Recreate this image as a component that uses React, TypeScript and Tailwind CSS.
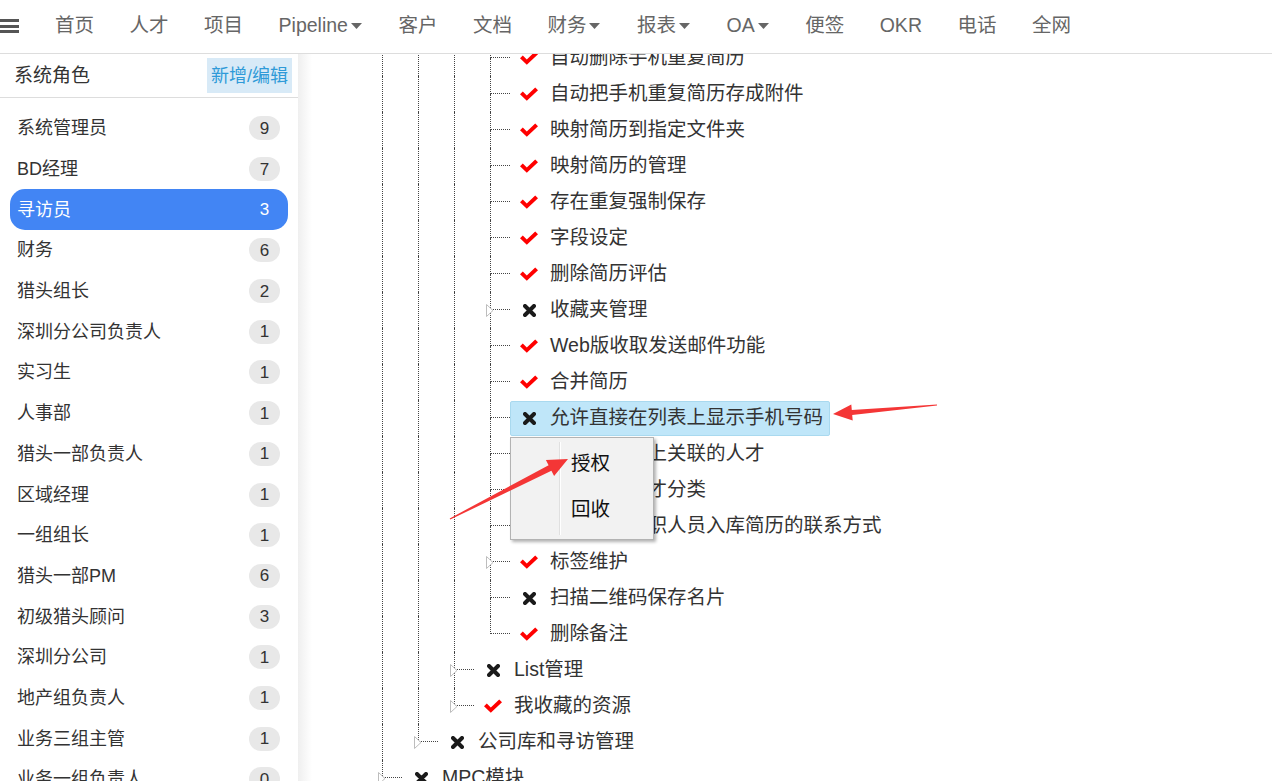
import React from 'react';

type TreeRow = {
  depth: number;
  ok: boolean;
  text: string;
  last?: boolean;
  collapsed?: boolean;
  selected?: boolean;
};

const navItems: { label: string; caret?: boolean }[] = [
  { label: '首页' },
  { label: '人才' },
  { label: '项目' },
  { label: 'Pipeline', caret: true },
  { label: '客户' },
  { label: '文档' },
  { label: '财务', caret: true },
  { label: '报表', caret: true },
  { label: 'OA', caret: true },
  { label: '便签' },
  { label: 'OKR' },
  { label: '电话' },
  { label: '全网' },
];

const roles: [string, number][] = [
  ['系统管理员', 9],
  ['BD经理', 7],
  ['寻访员', 3],
  ['财务', 6],
  ['猎头组长', 2],
  ['深圳分公司负责人', 1],
  ['实习生', 1],
  ['人事部', 1],
  ['猎头一部负责人', 1],
  ['区域经理', 1],
  ['一组组长', 1],
  ['猎头一部PM', 6],
  ['初级猎头顾问', 3],
  ['深圳分公司', 1],
  ['地产组负责人', 1],
  ['业务三组主管', 1],
  ['业务一组负责人', 0],
];

const rows: TreeRow[] = [
  { depth: 3, ok: true, text: '自动删除手机重复简历' },
  { depth: 3, ok: true, text: '自动把手机重复简历存成附件' },
  { depth: 3, ok: true, text: '映射简历到指定文件夹' },
  { depth: 3, ok: true, text: '映射简历的管理' },
  { depth: 3, ok: true, text: '存在重复强制保存' },
  { depth: 3, ok: true, text: '字段设定' },
  { depth: 3, ok: true, text: '删除简历评估' },
  { depth: 3, ok: false, text: '收藏夹管理', collapsed: true },
  { depth: 3, ok: true, text: 'Web版收取发送邮件功能' },
  { depth: 3, ok: true, text: '合并简历' },
  { depth: 3, ok: false, text: '允许直接在列表上显示手机号码', selected: true },
  { depth: 3, ok: true, text: '显示列表页上关联的人才' },
  { depth: 3, ok: true, text: '管理简历人才分类' },
  { depth: 3, ok: false, text: '允许查看离职人员入库简历的联系方式' },
  { depth: 3, ok: true, text: '标签维护', collapsed: true },
  { depth: 3, ok: false, text: '扫描二维码保存名片' },
  { depth: 3, ok: true, text: '删除备注', last: true },
  { depth: 2, ok: false, text: 'List管理', collapsed: true },
  { depth: 2, ok: true, text: '我收藏的资源', collapsed: true, last: true },
  { depth: 1, ok: false, text: '公司库和寻访管理', collapsed: true, last: true },
  { depth: 0, ok: false, text: 'MPC模块', collapsed: true },
];

function CheckIcon() {
  return (
    <svg width="18" height="14" viewBox="0 0 18 14">
      <polygon points="0,7.2 2.8,4.6 6.8,8.4 15.2,0.4 18,3.2 6.8,13.8" fill="#f00" />
    </svg>
  );
}

function CrossIcon() {
  return (
    <svg width="13" height="13" viewBox="0 0 13 13">
      <path d="M2 2 L11 11 M11 2 L2 11" stroke="#1a1a1a" strokeWidth="4" strokeLinecap="round" />
    </svg>
  );
}

function Row({ row }: { row: TreeRow }) {
  return (
    <div className="flex h-[36px] items-stretch">
      {Array.from({ length: row.depth }).map((_, i) => (
        <div key={i} className="w-[36px] shrink-0 pl-[8px]">
          <div className="h-full border-l border-dotted border-[#444]" />
        </div>
      ))}
      <div className="relative w-[28px] shrink-0 flex flex-col">
        <div className="ml-[8px] h-[18px] w-[20px] border-l border-b border-dotted border-[#444]" />
        {!row.last && <div className="ml-[8px] h-[18px] border-l border-dotted border-[#444]" />}
        {row.collapsed && (
          <svg className="absolute left-[4px] top-[12px]" width="8" height="13" viewBox="0 0 8 13">
            <polygon points="0.5,0.5 7,6.5 0.5,12.5" fill="#fff" stroke="#bdbdbd" strokeWidth="1" />
          </svg>
        )}
      </div>
      <div
        className={
          row.selected
            ? 'my-[0.5px] flex items-center pl-[9px] pr-[6px] bg-[#bfe6f9] border border-[#a9d9ef] rounded-[2px]'
            : 'flex items-center pl-[10px] pr-[7px]'
        }
      >
        <div className="w-[18px] flex justify-center">{row.ok ? <CheckIcon /> : <CrossIcon />}</div>
        <span className="ml-[12px] text-[19.5px] leading-none whitespace-nowrap text-[#333]">{row.text}</span>
      </div>
    </div>
  );
}

export default function App() {
  return (
    <div className="relative w-[1272px] h-[781px] overflow-hidden bg-white text-[#333] font-['Liberation_Sans','Noto_Sans_CJK_SC',sans-serif]">
      <header className="h-[54px] border-b border-[#dddddd] flex items-center pb-[1px]">
        <div className="w-[19px] flex flex-col gap-[2.5px]">
          <div className="h-[3px] bg-[#555]" />
          <div className="h-[3px] bg-[#555]" />
          <div className="h-[3px] bg-[#555]" />
        </div>
        <nav className="ml-[36px] flex items-center gap-[35.5px] text-[19.5px] leading-none text-[#666]">
          {navItems.map((n) => (
            <div key={n.label} className="flex items-center whitespace-nowrap">
              <span>{n.label}</span>
              {n.caret && (
                <svg className="ml-[3px] mr-[1px]" width="11" height="6" viewBox="0 0 11 6">
                  <polygon points="0,0 11,0 5.5,6" fill="#666" />
                </svg>
              )}
            </div>
          ))}
        </nav>
      </header>

      <div className="flex h-[727px]">
        <aside className="w-[298px] shrink-0 flex flex-col overflow-hidden">
          <div className="h-[44px] shrink-0 border-b border-[#dddddd] flex items-center justify-between pl-[14px] pr-[6px]">
            <span className="text-[19px] leading-none text-[#333]">系统角色</span>
            <button className="h-[35px] px-[4px] bg-[#d8eaf7] text-[18px] leading-none text-[#2f9ad8]">新增/编辑</button>
          </div>
          <ul className="pt-[10px] shrink-0">
            {roles.map(([name, count], i) => {
              const active = i === 2;
              return (
                <li
                  key={name}
                  className={
                    active
                      ? 'mx-[10px] h-[40.7px] px-[7px] pr-[8px] flex items-center justify-between rounded-[15px] bg-[#4285f4] text-white'
                      : 'mx-[10px] h-[40.7px] px-[7px] pr-[8px] flex items-center justify-between text-[#333]'
                  }
                >
                  <span className="text-[18px] leading-none whitespace-nowrap">{name}</span>
                  <span
                    className={
                      active
                        ? 'w-[31px] h-[24px] rounded-full flex items-center justify-center text-[17px] leading-none'
                        : 'w-[31px] h-[24px] rounded-full flex items-center justify-center text-[17px] leading-none bg-[#e8e8e8]'
                    }
                  >
                    {count}
                  </span>
                </li>
              );
            })}
          </ul>
        </aside>
        <div className="w-[14px] shrink-0 bg-linear-to-r from-[#efefef] to-white" />
        <main className="flex-1 overflow-hidden pl-[62px]">
          <div className="-mt-[14px]">
            {rows.map((r) => (
              <Row key={r.text} row={r} />
            ))}
          </div>
        </main>
      </div>

      <div className="absolute left-[510px] top-[437px] w-[144px] h-[103px] bg-[#f2f2f2] border border-[#b3b3b3] shadow-[2px_2px_3px_rgba(0,0,0,0.3)] flex">
        <div className="w-[50px] shrink-0 py-[4px] flex justify-end">
          <div className="w-[2px] h-full border-l border-[#e0e0e0] bg-white" />
        </div>
        <div className="flex flex-col pl-[10px] pt-[3px] text-[19.5px] leading-none text-[#111]">
          <div className="h-[46px] flex items-center">授权</div>
          <div className="h-[46px] flex items-center">回收</div>
        </div>
      </div>

      <svg className="absolute left-0 top-0 pointer-events-none" width="1272" height="781" viewBox="0 0 1272 781">
        <polygon points="937,404.4 851.8,409.9 851.3,404.4 833,414 852.7,420.4 852.2,414.9 937,405.6" fill="#f43636" />
        <polygon points="449.7,518.4 548.6,465.3 545.9,460 568,459 554.1,476 551.4,470.7 450.3,519.6" fill="#f43636" />
      </svg>
    </div>
  );
}
